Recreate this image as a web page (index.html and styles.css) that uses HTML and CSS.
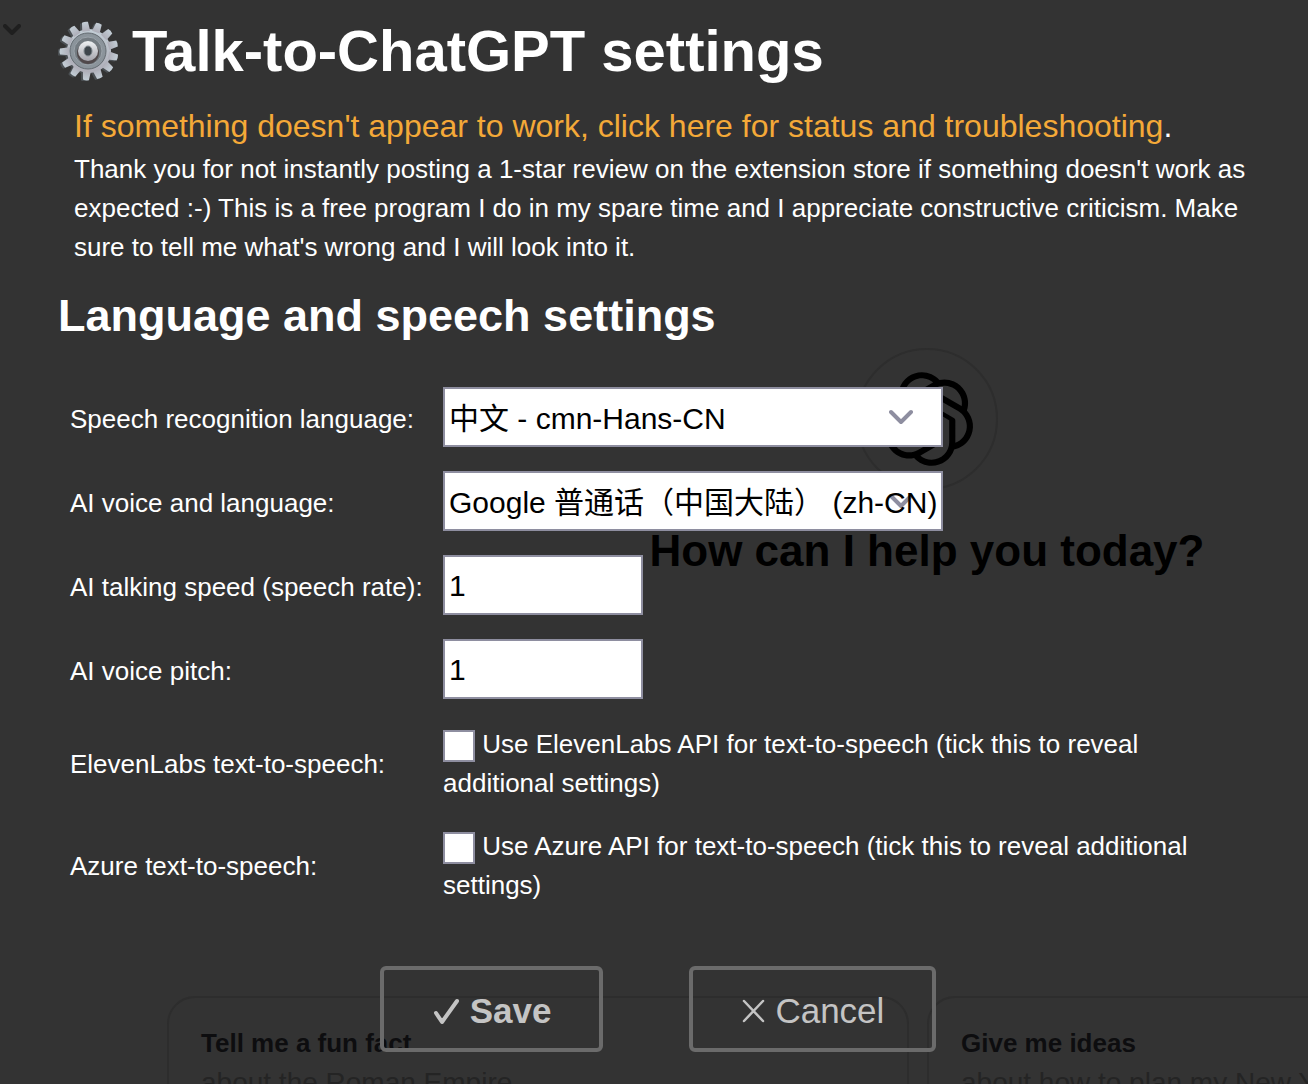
FILE: index.html
```
<!DOCTYPE html>
<html lang="en">
<head>
    <meta charset="UTF-8">
    <title>Talk-to-ChatGPT settings</title>
    <link rel="stylesheet" href="styles.css">
</head>
<body>
    <div class="page">
        <!-- Chat page behind the settings -->
        <div class="chat">
            <div class="chat-column">
                <div class="logo">
                    <svg viewBox="0 0 41 41" width="96" height="96" aria-hidden="true"><path fill="#000" d="M37.5324 16.8707C37.9808 15.5241 38.1363 14.0974 37.9886 12.6859C37.8409 11.2744 37.3934 9.91076 36.676 8.68622C35.6126 6.83404 33.9882 5.3676 32.0373 4.4985C30.0864 3.62941 27.9098 3.40259 25.8215 3.85078C24.8796 2.7893 23.7219 1.94125 22.4257 1.36341C21.1295 0.785575 19.7249 0.491269 18.3058 0.500197C16.1708 0.495044 14.0893 1.16803 12.3614 2.42214C10.6335 3.67624 9.34853 5.44666 8.6917 7.47815C7.30085 7.76286 5.98686 8.3414 4.8377 9.17505C3.68854 10.0087 2.73073 11.0782 2.02839 12.312C0.956464 14.1591 0.498905 16.2988 0.721698 18.4228C0.944492 20.5467 1.83612 22.5449 3.268 24.1293C2.81966 25.4759 2.66413 26.9026 2.81182 28.3141C2.95951 29.7256 3.40701 31.0892 4.12437 32.3138C5.18791 34.1659 6.8123 35.6322 8.76321 36.5013C10.7141 37.3704 12.8907 37.5973 14.9789 37.1492C15.9208 38.2107 17.0786 39.0587 18.3747 39.6366C19.6709 40.2144 21.0755 40.5087 22.4946 40.4998C24.6307 40.5054 26.7133 39.8321 28.4418 38.5772C30.1704 37.3223 31.4556 35.5506 32.1119 33.5179C33.5027 33.2332 34.8167 32.6547 35.9659 31.821C37.115 30.9874 38.0728 29.9178 38.7752 28.684C39.8458 26.8371 40.3023 24.6979 40.0789 22.5748C39.8556 20.4517 38.9639 18.4544 37.5324 16.8707ZM22.4978 37.8849C20.7443 37.8874 19.0459 37.2733 17.6994 36.1501C17.7601 36.117 17.8666 36.0586 17.936 36.0161L25.9004 31.4156C26.1003 31.3019 26.2663 31.137 26.3813 30.9378C26.4964 30.7386 26.5563 30.5124 26.5549 30.2825V19.0542L29.9213 20.998C29.9389 21.0068 29.9541 21.0198 29.9656 21.0359C29.977 21.052 29.9842 21.0707 29.9867 21.0902V30.3889C29.9842 32.375 29.1946 34.2791 27.7909 35.6841C26.3872 37.0892 24.4838 37.8806 22.4978 37.8849ZM6.39227 31.0064C5.51397 29.4888 5.19742 27.7107 5.49804 25.9832C5.55718 26.0187 5.66048 26.0818 5.73461 26.1244L13.699 30.7248C13.8975 30.8408 14.1233 30.902 14.3532 30.902C14.583 30.902 14.8088 30.8408 15.0073 30.7248L24.731 25.1103V28.9979C24.7321 29.0177 24.7283 29.0376 24.7199 29.0556C24.7115 29.0736 24.6988 29.0893 24.6829 29.1012L16.6317 33.7497C14.9096 34.7416 12.8643 35.0097 10.9447 34.4954C9.02506 33.9811 7.38785 32.7263 6.39227 31.0064ZM4.29707 13.6194C5.17156 12.0998 6.55279 10.9364 8.19885 10.3327C8.19885 10.4013 8.19491 10.5228 8.19491 10.6071V19.808C8.19351 20.0378 8.25334 20.2638 8.36823 20.4629C8.48312 20.6619 8.64893 20.8267 8.84863 20.9404L18.5723 26.5542L15.206 28.4979C15.1894 28.5089 15.1703 28.5155 15.1505 28.5173C15.1307 28.5191 15.1107 28.516 15.0924 28.5082L7.04046 23.8557C5.32135 22.8601 4.06716 21.2235 3.55289 19.3046C3.03862 17.3858 3.30624 15.3413 4.29707 13.6194ZM31.955 20.0556L22.2312 14.4411L25.5976 12.4981C25.6142 12.4872 25.6333 12.4805 25.6531 12.4787C25.6729 12.4769 25.6928 12.4801 25.7111 12.4879L33.7631 17.1364C34.9967 17.849 36.0017 18.8982 36.6606 20.1613C37.3194 21.4244 37.6047 22.849 37.4832 24.2684C37.3617 25.6878 36.8382 27.0432 35.9743 28.1759C35.1103 29.3086 33.9415 30.1717 32.6047 30.6641C32.6047 30.5947 32.6047 30.4733 32.6047 30.3889V21.188C32.6066 20.9586 32.5474 20.7328 32.4332 20.5338C32.319 20.3348 32.154 20.1698 31.955 20.0556ZM35.3055 15.0128C35.2464 14.9765 35.1431 14.9142 35.069 14.8717L27.1045 10.2712C26.906 10.1554 26.6803 10.0943 26.4504 10.0943C26.2206 10.0943 25.9948 10.1554 25.7963 10.2712L16.0726 15.8858V11.9982C16.0715 11.9783 16.0753 11.9585 16.0837 11.9405C16.0921 11.9225 16.1048 11.9068 16.1207 11.8949L24.1719 7.25025C25.4053 6.53903 26.8158 6.19376 28.2383 6.25482C29.6608 6.31589 31.0364 6.78077 32.2044 7.59508C33.3723 8.40939 34.2842 9.53945 34.8334 10.8531C35.3826 12.1667 35.5464 13.6095 35.3055 15.0128ZM14.2424 21.9419L10.8752 19.9981C10.8576 19.9893 10.8423 19.9763 10.8309 19.9602C10.8195 19.9441 10.8122 19.9254 10.8098 19.9058V10.6071C10.8107 9.18295 11.2173 7.78848 11.9819 6.58696C12.7466 5.38544 13.8377 4.42659 15.1275 3.82264C16.4173 3.21869 17.8524 2.99464 19.2649 3.1767C20.6775 3.35876 22.0089 3.93941 23.1034 4.85067C23.0427 4.88379 22.937 4.94215 22.8668 4.98473L14.9024 9.58517C14.7025 9.69878 14.5366 9.86356 14.4215 10.0626C14.3065 10.2616 14.2466 10.4877 14.2479 10.7175L14.2424 21.9419ZM16.071 17.9991L20.4018 15.4978L24.7325 17.9975V22.9985L20.4018 25.4983L16.071 22.9985V17.9991Z"/></svg>
                </div>
                <div class="greeting">How can I help you today?</div>
                <div class="cards">
                    <div class="card">
                        <div class="card-title">Tell me a fun fact</div>
                        <div class="card-text">about the Roman Empire</div>
                    </div>
                    <div class="card">
                        <div class="card-title">Give me ideas</div>
                        <div class="card-text">about how to plan my New Years resolutions</div>
                    </div>
                </div>
            </div>
            <svg class="chat-arrow" viewBox="0 0 18 12" width="18" height="12" aria-hidden="true"><path d="M2 2l7 7 7-7" fill="none" stroke="#1f1f1f" stroke-width="4" stroke-linecap="round" stroke-linejoin="round"/></svg>
        </div>

        <!-- Settings -->
        <form class="settings">
            <h1>
                <svg class="gear" viewBox="-30 -30 60 60" width="60" height="60" aria-hidden="true">
                    <defs>
                        <linearGradient id="metal" x1="0" y1="0" x2="0" y2="1">
                            <stop offset="0" stop-color="#c3ced6"/>
                            <stop offset="1" stop-color="#aeaeb8"/>
                        </linearGradient>
                        <linearGradient id="hub" x1="0" y1="0" x2="0" y2="1">
                            <stop offset="0" stop-color="#eef1f3"/>
                            <stop offset="1" stop-color="#a3a3ab"/>
                        </linearGradient>
                        <path id="tooth" d="M-4-20L-3-29Q0-30 3-29L4-20Z"/>
                        <g id="wheel">
                            <circle r="22"/>
                            <use href="#tooth" transform="rotate(-8)"/>
                            <use href="#tooth" transform="rotate(20)"/>
                            <use href="#tooth" transform="rotate(47)"/>
                            <use href="#tooth" transform="rotate(75)"/>
                            <use href="#tooth" transform="rotate(103)"/>
                            <use href="#tooth" transform="rotate(130)"/>
                            <use href="#tooth" transform="rotate(158)"/>
                            <use href="#tooth" transform="rotate(186)"/>
                            <use href="#tooth" transform="rotate(214)"/>
                            <use href="#tooth" transform="rotate(241)"/>
                            <use href="#tooth" transform="rotate(269)"/>
                            <use href="#tooth" transform="rotate(297)"/>
                            <use href="#tooth" transform="rotate(324)"/>
                        </g>
                    </defs>
                    <use href="#wheel" x="-1" y="1" fill="#4b5054"/>
                    <use href="#wheel" x="1" fill="url(#metal)"/>
                    <circle r="18" fill="#8b949b" stroke="#656c72" stroke-width="1"/>
                    <circle r="14" fill="#737b81" stroke="#9ba3aa" stroke-width="1"/>
                    <circle cy="2" r="11" fill="#50494b"/>
                    <circle r="10" fill="url(#hub)"/>
                    <ellipse rx="4" ry="5" fill="#3e464c" stroke="#7f878d" stroke-width="1"/>
                </svg>
                Talk-to-ChatGPT settings
            </h1>
            <div class="notice">
                <p class="status"><a href="#">If something doesn't appear to work, click here for status and troubleshooting</a>.</p>
                <p>Thank you for not instantly posting a 1-star review on the extension store if something doesn't work as expected :-) This is a free program I do in my spare time and I appreciate constructive criticism. Make sure to tell me what's wrong and I will look into it.</p>
            </div>

            <h2>Language and speech settings</h2>

            <div class="row field">
                <label for="recLang">Speech recognition language:</label>
                <select id="recLang"><option>中文 - cmn-Hans-CN</option></select>
            </div>
            <div class="row field">
                <label for="voice">AI voice and language:</label>
                <select id="voice"><option>Google 普通话（中国大陆） (zh-CN)</option></select>
            </div>
            <div class="row field">
                <label for="rate">AI talking speed (speech rate):</label>
                <input type="text" id="rate" value="1">
            </div>
            <div class="row field">
                <label for="pitch">AI voice pitch:</label>
                <input type="text" id="pitch" value="1">
            </div>
            <div class="services">
                <div class="row">
                    <span>ElevenLabs text-to-speech:</span>
                    <label><input type="checkbox"> Use ElevenLabs API for text-to-speech (tick this to reveal additional settings)</label>
                </div>
                <div class="row">
                    <span>Azure text-to-speech:</span>
                    <label><input type="checkbox"> Use Azure API for text-to-speech (tick this to reveal additional settings)</label>
                </div>
            </div>

            <div class="buttons">
                <button type="button" class="save">
                    <svg viewBox="0 0 28 28" width="28" height="28" aria-hidden="true"><path d="M4 16l6 9L25 4" fill="none" stroke="currentColor" stroke-width="4" stroke-linecap="round" stroke-linejoin="round"/></svg>
                    Save
                </button>
                <button type="button">
                    <svg viewBox="0 0 24 28" width="24" height="28" aria-hidden="true"><path d="M3 4l19 20M22 4L3 24" fill="none" stroke="currentColor" stroke-width="2.5" stroke-linecap="round"/></svg>
                    Cancel
                </button>
            </div>
        </form>
    </div>
</body>
</html>
```
FILE: styles.css
```
* {
    box-sizing: border-box;
}
body {
    margin: 0;
    background-color: #333;
    color: #fff;
    font-family: "Liberation Sans", "Noto Sans CJK SC", sans-serif;
    font-size: 26px;
    line-height: 39px;
}
.page {
    position: relative;
    min-height: 100vh;
    overflow: hidden;
}

/* chat page */
.chat {
    position: absolute;
    inset: 0;
    overflow: hidden;
    padding: 348px 0 0 167px;
    color: #000;
}
.chat-column {
    width: 1520px;
}
.logo {
    display: flex;
    align-items: center;
    justify-content: center;
    width: 142px;
    height: 142px;
    margin: 0 auto;
    border: 2px solid #2d2d2d;
    border-radius: 50%;
}
.greeting {
    margin: 30px 0 414px;
    text-align: center;
    font-size: 44px;
    font-weight: bold;
    line-height: 62px;
}
.cards {
    display: grid;
    grid-template-columns: 1fr 1fr;
    gap: 18px;
    padding-right: 18px;
}
.card {
    padding: 26px 32px;
    border: 2px solid #2d2d2d;
    border-radius: 28px;
}
.card-title {
    color: #0d0d0f;
    font-weight: bold;
}
.card-text {
    color: #242424;
    font-size: 28px;
}
.chat-arrow {
    position: absolute;
    top: 24px;
    left: 3px;
}

/* settings */
.settings {
    position: relative;
    padding: 6px 58px 32px;
}
h1 {
    display: flex;
    align-items: center;
    gap: 14px;
    margin: 0 0 6px;
    font-size: 58px;
    line-height: 90px;
}
.notice {
    padding-left: 16px;
}
p {
    margin: 0;
}
.status {
    font-size: 32px;
    line-height: 48px;
}
a {
    color: #f4a938;
    text-decoration: none;
}
h2 {
    margin: 13px 0 23px;
    font-size: 45px;
    line-height: 72px;
}
.row {
    display: grid;
    grid-template-columns: 373px 1fr;
    align-items: center;
    padding: 12px 5px 12px 12px;
}
.field label {
    padding-top: 4px;
}
select,
input {
    appearance: none;
    margin: 0;
    border: 2px solid #8e8ea0;
    border-radius: 0;
    background-color: #fff;
    color: #000;
    font-family: inherit;
    font-size: 30px;
}
select {
    width: 500px;
    height: 60px;
    padding: 2px 0 0 4px;
    background-image: url("data:image/svg+xml,%3Csvg xmlns='http://www.w3.org/2000/svg' width='24' height='16'%3E%3Cpath d='M2 3l10 10 10-10' fill='none' stroke='%238e8ea0' stroke-width='4' stroke-linecap='round' stroke-linejoin='round'/%3E%3C/svg%3E");
    background-repeat: no-repeat;
    background-position: right 28px center;
}
input[type="text"] {
    width: 200px;
    height: 60px;
    padding: 2px 4px 0;
}
input[type="checkbox"] {
    width: 32px;
    height: 32px;
    vertical-align: middle;
}
.services {
    margin-top: 2px;
}
.buttons {
    display: flex;
    justify-content: center;
    gap: 86px;
    margin-top: 49px;
    padding-left: 8px;
}
button {
    display: flex;
    align-items: center;
    gap: 10px;
    height: 86px;
    padding: 4px 48px 0;
    border: 4px solid #6b6b6b;
    border-radius: 6px;
    background: none;
    color: #c4c4c4;
    font-family: inherit;
    font-size: 35px;
}
.save {
    font-weight: bold;
}
```
